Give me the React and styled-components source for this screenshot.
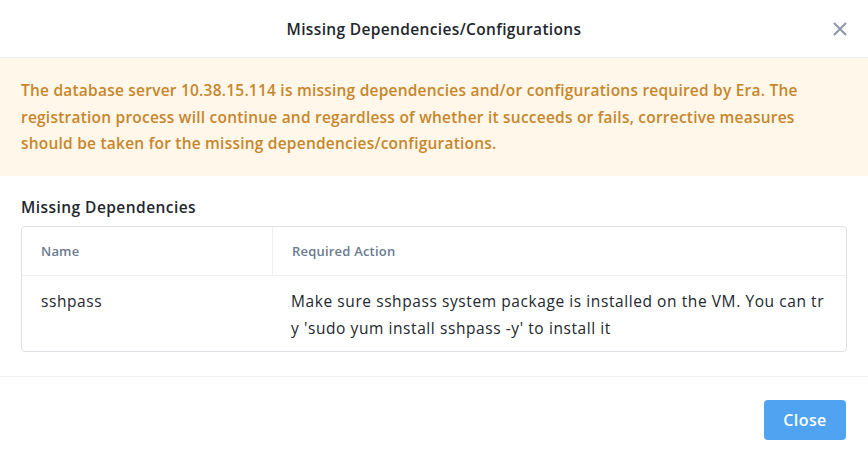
import React from 'react';
import styled, { createGlobalStyle } from 'styled-components';

const GlobalStyle = createGlobalStyle`
    html, body {
        margin: 0;
        padding: 0;
        background: #ffffff;
    }
    body {
        font-family: "Open Sans", Lato, sans-serif;
        color: #22272e;
    }
`;

const Dialog = styled.div`
    width: 868px;
    height: 463px;
    display: flex;
    flex-direction: column;
    background: #ffffff;
`;

const Header = styled.div`
    position: relative;
    height: 58px;
    display: flex;
    align-items: center;
    justify-content: center;
    border-bottom: 1px solid #eef0f3;
    box-sizing: border-box;
`;

const Title = styled.div`
    font-size: 15.5px;
    font-weight: 600;
    letter-spacing: 0.35px;
    color: #22272e;
`;

const CloseIcon = styled.button`
    position: absolute;
    right: 20px;
    top: 21px;
    width: 16px;
    height: 16px;
    padding: 0;
    border: none;
    background: none;
    cursor: pointer;
    display: flex;
`;

const Warning = styled.div`
    background: #fef7ea;
    color: #c8862a;
    font-size: 15.5px;
    font-weight: 600;
    letter-spacing: 0.22px;
    line-height: 26.5px;
    padding: 19px 21px 19px 21px;
`;

const Body = styled.div`
    flex: 1;
    padding: 20px 21px 0 21px;
    border-bottom: 1px solid #eef0f3;
`;

const SectionTitle = styled.div`
    font-size: 15.5px;
    font-weight: 600;
    letter-spacing: 0.45px;
    color: #22272e;
    margin-bottom: 8px;
`;

const Table = styled.div`
    border: 1px solid #dde0e5;
    border-radius: 4px;
`;

const Row = styled.div`
    display: grid;
    grid-template-columns: 250px 1fr;
    border-top: ${p => (p.head ? 'none' : '1px solid #eef0f3')};
`;

const Cell = styled.div`
    padding: ${p => (p.head ? '16px 19px 15px 19px' : '12px 19px 9px 19px')};
    font-size: ${p => (p.head ? '13px' : '15.5px')};
    font-weight: ${p => (p.head ? 600 : 400)};
    letter-spacing: ${p => (p.head ? '0.2px' : '0.58px')};
    color: ${p => (p.head ? '#6b7a90' : '#22272e')};
    line-height: ${p => (p.head ? '17px' : '27px')};
    border-left: ${p => (p.divider ? '1px solid #eef0f3' : 'none')};
    word-break: break-all;
`;

const Footer = styled.div`
    height: 86px;
    display: flex;
    align-items: center;
    justify-content: flex-end;
    padding: 0 22px;
`;

const Button = styled.button`
    background: #4fa3f1;
    color: #ffffff;
    border: none;
    border-radius: 4px;
    width: 82px;
    height: 40px;
    font-family: "Open Sans", Lato, sans-serif;
    font-size: 16px;
    font-weight: 600;
    letter-spacing: 0.4px;
    cursor: pointer;
`;

function App() {
    return (
        <>
            <GlobalStyle />
            <Dialog>
                <Header>
                    <Title>Missing Dependencies/Configurations</Title>
                    <CloseIcon aria-label="close">
                        <svg width="16" height="16" viewBox="0 0 16 16">
                            <path d="M2.5 2.5 L13.5 13.5 M13.5 2.5 L2.5 13.5" stroke="#8a96a6" strokeWidth="2" strokeLinecap="round" />
                        </svg>
                    </CloseIcon>
                </Header>
                <Warning>
                    The database server 10.38.15.114 is missing dependencies and/or configurations required by Era. The
                    registration process will continue and regardless of whether it succeeds or fails, corrective measures
                    should be taken for the missing dependencies/configurations.
                </Warning>
                <Body>
                    <SectionTitle>Missing Dependencies</SectionTitle>
                    <Table>
                        <Row head>
                            <Cell head>Name</Cell>
                            <Cell head divider>Required Action</Cell>
                        </Row>
                        <Row>
                            <Cell>sshpass</Cell>
                            <Cell>Make sure sshpass system package is installed on the VM. You can try 'sudo yum install sshpass -y' to install it</Cell>
                        </Row>
                    </Table>
                </Body>
                <Footer>
                    <Button>Close</Button>
                </Footer>
            </Dialog>
        </>
    );
}

export default App;
